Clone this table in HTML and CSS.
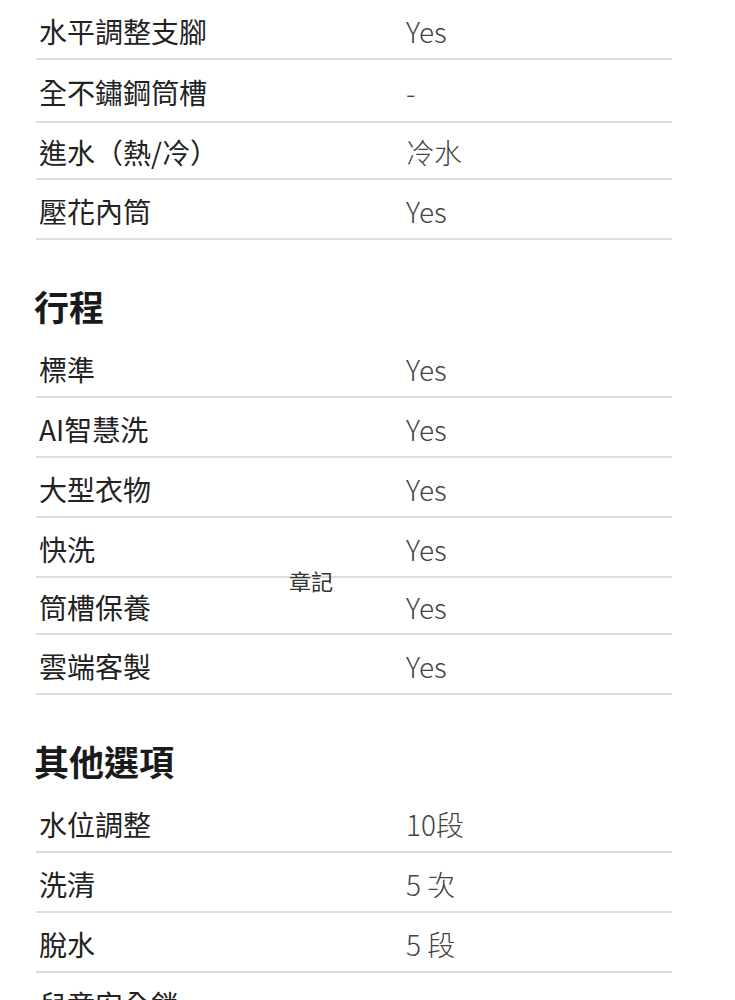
FILE: index.html
```html
<!DOCTYPE html>
<html lang="zh-Hant">
<head>
<meta charset="utf-8">
<link rel="stylesheet" href="styles.css">
</head>
<body>
<div class="page">
  <div class="spec">
    <div class="row"><div class="label">水平調整支腳</div><div class="value">Yes</div></div>
    <div class="row tall"><div class="label">全不鏽鋼筒槽</div><div class="value">-</div></div>
    <div class="row short"><div class="label">進水（熱/冷）</div><div class="value">冷水</div></div>
    <div class="row"><div class="label">壓花內筒</div><div class="value">Yes</div></div>
  </div>

  <h2 class="heading">行程</h2>
  <div class="spec">
    <div class="row"><div class="label">標準</div><div class="value">Yes</div></div>
    <div class="row"><div class="label">AI智慧洗</div><div class="value">Yes</div></div>
    <div class="row"><div class="label">大型衣物</div><div class="value">Yes</div></div>
    <div class="row"><div class="label">快洗</div><div class="value">Yes</div></div>
    <div class="row short"><div class="label">筒槽保養</div><div class="value">Yes</div></div>
    <div class="row"><div class="label">雲端客製</div><div class="value">Yes</div></div>
  </div>

  <h2 class="heading loose">其他選項</h2>
  <div class="spec">
    <div class="row"><div class="label">水位調整</div><div class="value">10段</div></div>
    <div class="row"><div class="label">洗清</div><div class="value">5 次</div></div>
    <div class="row"><div class="label">脫水</div><div class="value">5 段</div></div>
    <div class="row"><div class="label">兒童安全鎖</div><div class="value"></div></div>
  </div>

  <div class="stamp">章記</div>
</div>
</body>
</html>
```

FILE: styles.css
```css
html, body {
  margin: 0;
  padding: 0;
  background: #ffffff;
}

body {
  font-family: "Noto Sans CJK TC", "Noto Sans", sans-serif;
  color: #222222;
}

.page {
  position: relative;
  width: 636px;
  margin-left: 36px;
}

.spec {
  display: flex;
  flex-direction: column;
}

.row {
  display: grid;
  grid-template-columns: 370px 1fr;
  height: 60px;
  box-sizing: border-box;
  padding-top: 11px;
  border-bottom: 2px solid #dcdcdc;
  font-size: 28px;
  line-height: 40px;
}

.row.tall {
  height: 63px;
  padding-top: 12px;
}

.row.short {
  height: 57px;
  padding-top: 9px;
}

.label {
  padding-left: 3px;
  font-weight: 400;
  color: #222222;
}

.value {
  font-weight: 300;
  color: #444444;
}

.heading {
  margin: 0 0 0 -2px;
  padding-top: 41px;
  padding-bottom: 7px;
  font-size: 35px;
  line-height: 50px;
  font-weight: 700;
  color: #1a1a1a;
}

.heading.loose {
  padding-top: 41px;
  padding-bottom: 7px;
}

.stamp {
  position: absolute;
  left: 253px;
  top: 565px;
  font-size: 22px;
  line-height: 30px;
  color: #333333;
}
```
